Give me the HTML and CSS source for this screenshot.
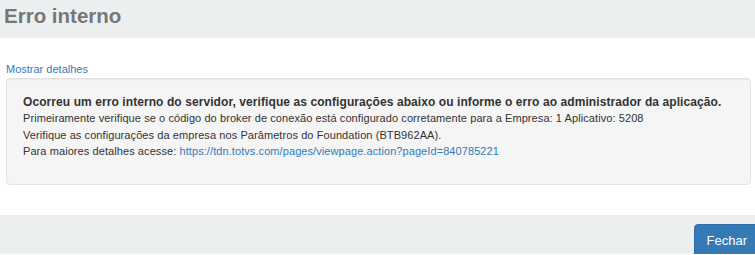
FILE: index.html
```html
<!DOCTYPE html>
<html lang="pt-BR">
<head>
    <meta charset="UTF-8">
    <title>Erro interno</title>
    <link rel="stylesheet" href="styles.css">
</head>
<body>
    <div class="modal">
        <div class="modal-header">
            <h4 class="modal-title">Erro interno</h4>
        </div>
        <div class="modal-body">
            <a href="#" class="toggle">Mostrar detalhes</a>
            <div class="well">
                <strong>Ocorreu um erro interno do servidor, verifique as configurações abaixo ou informe o erro ao administrador da aplicação.</strong><br>
                Primeiramente verifique se o código do broker de conexão está configurado corretamente para a Empresa: 1 Aplicativo: 5208<br>
                Verifique as configurações da empresa nos Parâmetros do Foundation (BTB962AA).<br>
                Para maiores detalhes acesse: <a href="#">https://tdn.totvs.com/pages/viewpage.action?pageId=840785221</a>
            </div>
        </div>
        <div class="modal-footer">
            <button class="btn">Fechar</button>
        </div>
    </div>
</body>
</html>
```

FILE: styles.css
```css
body {
    margin: 0;
    font-family: "Liberation Sans", Arial, sans-serif;
    font-size: 11px;
    line-height: 1.42857;
    color: #333;
    background-color: #fff;
    overflow: hidden;
}
a {
    color: #337ab7;
    text-decoration: none;
}
.modal-header {
    background-color: #eceff0;
    height: 38px;
    padding: 1px 4px 0;
    box-sizing: border-box;
}
.modal-title {
    margin: 0;
    font-size: 20.5px;
    line-height: 29px;
    font-weight: bold;
    color: #777;
}
.modal-body {
    padding: 23px 4px 30px 6px;
}
.toggle {
    display: block;
    line-height: 16px;
}
.well {
    background-color: #f5f5f5;
    border: 1px solid #e3e3e3;
    border-radius: 4px;
    box-shadow: inset 0 1px 1px rgba(0, 0, 0, 0.05);
    padding: 15px 16px 24px;
    margin-top: 1px;
    line-height: 16.4px;
    letter-spacing: 0.08px;
}
.well strong {
    font-size: 12px;
}
.modal-footer {
    background-color: #eceff0;
    height: 39px;
    box-sizing: border-box;
    padding-top: 9px;
    display: flex;
    justify-content: flex-end;
    align-items: flex-start;
}
.btn {
    flex: none;
    background-color: #337ab7;
    color: #fff;
    border: 1px solid #2e6da4;
    border-radius: 4px;
    font-family: "Liberation Sans", Arial, sans-serif;
    font-size: 13px;
    line-height: 18px;
    padding: 7px 12px 10px;
    margin-right: -5px;
}
```
